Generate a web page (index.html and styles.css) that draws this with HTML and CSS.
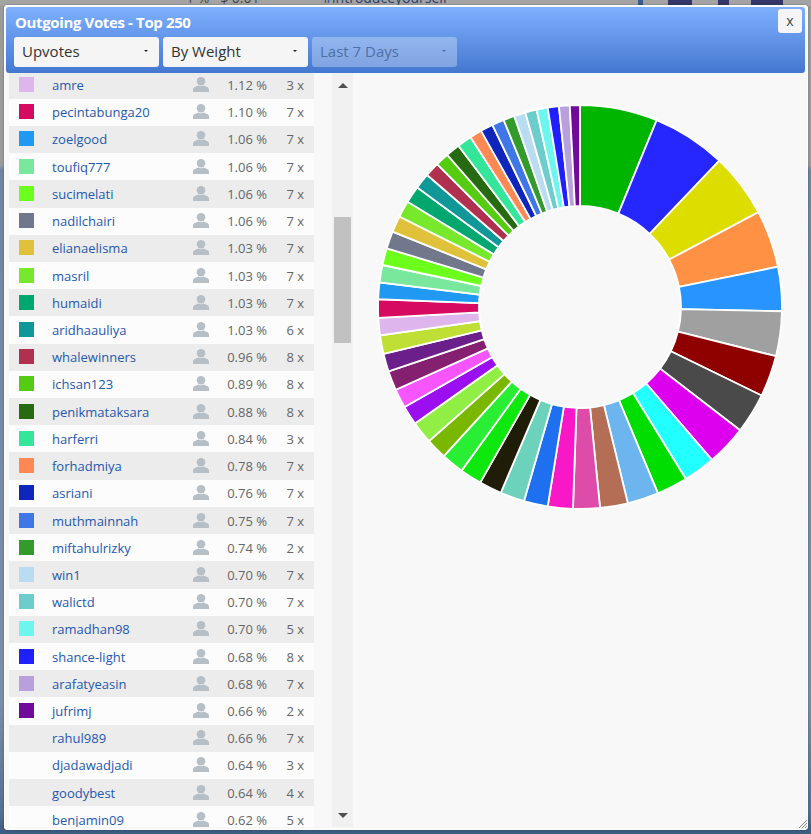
FILE: index.html
```html
<!DOCTYPE html>
<html lang="en">
<head>
<meta charset="utf-8">
<title>Outgoing Votes - Top 250</title>
<link rel="stylesheet" href="styles.css">
</head>
<body>
<div class="backdrop" aria-hidden="true">
  <span class="bd-text bd-a">1 % &nbsp; $ 0.01</span>
  <span class="bd-text bd-b">#introduceyourself</span>
  <i class="bd-block bd-1"></i><i class="bd-block bd-2"></i><i class="bd-block bd-3"></i><i class="bd-block bd-4"></i>
</div>
<div class="dialog">
  <header class="head">
    <h1 class="title">Outgoing Votes - Top 250</h1>
    <button class="close">x</button>
    <div class="selects">
      <div class="select"><span>Upvotes</span><i class="caret"></i></div>
      <div class="select"><span>By Weight</span><i class="caret"></i></div>
      <div class="select off"><span>Last 7 Days</span><i class="caret"></i></div>
    </div>
  </header>
  <div class="main">
    <div class="list">
      <div class="rows">
        <div class="row"><i class="sw c-amre"></i><a>amre</a><svg class="user"><use href="#u"/></svg><span class="pct">1.12 %</span><span class="cnt">3 x</span></div>
        <div class="row"><i class="sw c-pec"></i><a>pecintabunga20</a><svg class="user"><use href="#u"/></svg><span class="pct">1.10 %</span><span class="cnt">7 x</span></div>
        <div class="row"><i class="sw c-zoe"></i><a>zoelgood</a><svg class="user"><use href="#u"/></svg><span class="pct">1.06 %</span><span class="cnt">7 x</span></div>
        <div class="row"><i class="sw c-tou"></i><a>toufiq777</a><svg class="user"><use href="#u"/></svg><span class="pct">1.06 %</span><span class="cnt">7 x</span></div>
        <div class="row"><i class="sw c-suc"></i><a>sucimelati</a><svg class="user"><use href="#u"/></svg><span class="pct">1.06 %</span><span class="cnt">7 x</span></div>
        <div class="row"><i class="sw c-nad"></i><a>nadilchairi</a><svg class="user"><use href="#u"/></svg><span class="pct">1.06 %</span><span class="cnt">7 x</span></div>
        <div class="row"><i class="sw c-eli"></i><a>elianaelisma</a><svg class="user"><use href="#u"/></svg><span class="pct">1.03 %</span><span class="cnt">7 x</span></div>
        <div class="row"><i class="sw c-mas"></i><a>masril</a><svg class="user"><use href="#u"/></svg><span class="pct">1.03 %</span><span class="cnt">7 x</span></div>
        <div class="row"><i class="sw c-hum"></i><a>humaidi</a><svg class="user"><use href="#u"/></svg><span class="pct">1.03 %</span><span class="cnt">7 x</span></div>
        <div class="row"><i class="sw c-ari"></i><a>aridhaauliya</a><svg class="user"><use href="#u"/></svg><span class="pct">1.03 %</span><span class="cnt">6 x</span></div>
        <div class="row"><i class="sw c-wha"></i><a>whalewinners</a><svg class="user"><use href="#u"/></svg><span class="pct">0.96 %</span><span class="cnt">8 x</span></div>
        <div class="row"><i class="sw c-ich"></i><a>ichsan123</a><svg class="user"><use href="#u"/></svg><span class="pct">0.89 %</span><span class="cnt">8 x</span></div>
        <div class="row"><i class="sw c-pen"></i><a>penikmataksara</a><svg class="user"><use href="#u"/></svg><span class="pct">0.88 %</span><span class="cnt">8 x</span></div>
        <div class="row"><i class="sw c-har"></i><a>harferri</a><svg class="user"><use href="#u"/></svg><span class="pct">0.84 %</span><span class="cnt">3 x</span></div>
        <div class="row"><i class="sw c-for"></i><a>forhadmiya</a><svg class="user"><use href="#u"/></svg><span class="pct">0.78 %</span><span class="cnt">7 x</span></div>
        <div class="row"><i class="sw c-asr"></i><a>asriani</a><svg class="user"><use href="#u"/></svg><span class="pct">0.76 %</span><span class="cnt">7 x</span></div>
        <div class="row"><i class="sw c-mut"></i><a>muthmainnah</a><svg class="user"><use href="#u"/></svg><span class="pct">0.75 %</span><span class="cnt">7 x</span></div>
        <div class="row"><i class="sw c-mif"></i><a>miftahulrizky</a><svg class="user"><use href="#u"/></svg><span class="pct">0.74 %</span><span class="cnt">2 x</span></div>
        <div class="row"><i class="sw c-win"></i><a>win1</a><svg class="user"><use href="#u"/></svg><span class="pct">0.70 %</span><span class="cnt">7 x</span></div>
        <div class="row"><i class="sw c-wal"></i><a>walictd</a><svg class="user"><use href="#u"/></svg><span class="pct">0.70 %</span><span class="cnt">7 x</span></div>
        <div class="row"><i class="sw c-ram"></i><a>ramadhan98</a><svg class="user"><use href="#u"/></svg><span class="pct">0.70 %</span><span class="cnt">5 x</span></div>
        <div class="row"><i class="sw c-sha"></i><a>shance-light</a><svg class="user"><use href="#u"/></svg><span class="pct">0.68 %</span><span class="cnt">8 x</span></div>
        <div class="row"><i class="sw c-ara"></i><a>arafatyeasin</a><svg class="user"><use href="#u"/></svg><span class="pct">0.68 %</span><span class="cnt">7 x</span></div>
        <div class="row"><i class="sw c-juf"></i><a>jufrimj</a><svg class="user"><use href="#u"/></svg><span class="pct">0.66 %</span><span class="cnt">2 x</span></div>
        <div class="row"><i class="sw"></i><a>rahul989</a><svg class="user"><use href="#u"/></svg><span class="pct">0.66 %</span><span class="cnt">7 x</span></div>
        <div class="row"><i class="sw"></i><a>djadawadjadi</a><svg class="user"><use href="#u"/></svg><span class="pct">0.64 %</span><span class="cnt">3 x</span></div>
        <div class="row"><i class="sw"></i><a>goodybest</a><svg class="user"><use href="#u"/></svg><span class="pct">0.64 %</span><span class="cnt">4 x</span></div>
        <div class="row"><i class="sw"></i><a>benjamin09</a><svg class="user"><use href="#u"/></svg><span class="pct">0.62 %</span><span class="cnt">5 x</span></div>
      </div>
    </div>
    <div class="scrollbar">
      <div class="arrow"><i class="tri up"></i></div>
      <div class="thumb"></div>
      <div class="arrow end"><i class="tri down"></i></div>
    </div>
    <div class="pane">
      <svg class="pie" id="pie" viewBox="-203 -203 406 406" width="406" height="406"></svg>
    </div>
  </div>
  <svg class="grip" viewBox="0 0 8 8" width="8" height="8"><path d="M0 8 8 0M3 8l5-5M6 8l2-2"/></svg>
</div>
<svg class="defs" width="0" height="0">
  <symbol id="u" viewBox="0 0 16 15"><ellipse cx="8" cy="4.200" rx="4.300" ry="4.200"/><path d="M0 15v-2.500c0-1.900 1.400-2.600 3.200-3.100l2-.8c1.800 1 3.800 1 5.600 0l2 .8c1.800.5 3.200 1.200 3.200 3.100V15z"/></symbol>
</svg>
<script src="chart.js"></script>
</body>
</html>
```

FILE: styles.css
```css
* { box-sizing: border-box; }
html, body { margin: 0; height: 100%; overflow: hidden; }
body {
  font-family: "Open Sans", sans-serif;
  padding: 5px 3px 0 4px;
  background: linear-gradient(#9b9b9b 0, #9b9b9b 165px, #6f85a3 170px, #7a8ea8 700px, #556f92 815px, #3d5c82 831px);
}
.backdrop { position: absolute; left: 0; top: 0; width: 811px; height: 6px; overflow: hidden; background: #a3a3a3; }
.bd-text { position: absolute; top: -12px; font-size: 14px; color: #444; white-space: nowrap; }
.bd-a { left: 186px; }
.bd-b { left: 323px; color: #25406e; }
.bd-block { position: absolute; top: 0; height: 6px; background: #35356a; }
.bd-1 { left: 638px; width: 5px; background: #3a5f8f; }
.bd-2 { left: 668px; width: 24px; }
.bd-3 { left: 718px; width: 11px; }
.bd-4 { left: 751px; width: 32px; }

.dialog {
  position: relative;
  width: 804px;
  height: 825px;
  padding: 2px 3px 3px 2px;
  background: #f8f8f8;
  border-radius: 4px;
  box-shadow: inset 0 0 0 1px #fff, 0 0 2px rgba(0, 0, 0, .4);
}
.head {
  position: relative;
  height: 66px;
  padding: 6px 8px 0;
  background: linear-gradient(#7eb0ff, #4478d0);
  border-radius: 3px;
}
.title { margin: 0 0 6px 1px; font-size: 15px; line-height: 18px; font-weight: 700; color: #fff; letter-spacing: -.37px; }
.close {
  position: absolute; top: 2px; right: 3px;
  width: 24px; height: 24px; padding: 0;
  border: 0; border-radius: 3px;
  background: #f5f5f5; color: #444;
  font: 14px/22px "Open Sans", sans-serif;
}
.selects { display: flex; gap: 4px; }
.select {
  display: flex; align-items: center; justify-content: space-between;
  width: 145px; height: 30px; padding: 0 11px 2px 8px;
  background: #f5f5f5; color: #333; border-radius: 3px;
  font-size: 15px;
}
.select.off { background: rgba(255, 255, 255, .3); color: #4f6fa8; }
.caret { width: 0; height: 0; border: 2.500px solid transparent; border-top-color: #222; border-bottom: 0; }
.off .caret { border-top-color: #4f6fa8; }

.main { display: flex; height: 754px; }
.list { width: 305px; margin-left: 3px; overflow: hidden; flex: none; }
.rows { margin-top: -1.6px; }
.row {
  display: grid;
  grid-template-columns: 15px 159px 16px 58px 37px;
  align-items: center;
  height: 27.22px;
  padding-left: 10px;
  font-size: 13px;
  color: #666;
  background: #fcfcfc;
}
.row:nth-child(odd) { background: #ececec; }
.row a { color: #2458b0; padding-left: 18px; }
.sw { display: block; width: 15px; height: 15px; margin-top: -1px; }
.user { width: 16px; height: 15px; fill: #b7bfc6; margin-top: -1px; }
.pct, .cnt { text-align: right; }
.scrollbar { width: 21px; margin-left: 18px; flex: none; display: flex; flex-direction: column; background: #f1f1f1; }
.arrow { height: 24px; flex: none; display: flex; align-items: center; justify-content: center; }
.arrow.end { margin-top: auto; }
.thumb { height: 126px; margin: 120px 2px 0; background: #c1c1c1; }
.tri { width: 0; height: 0; border: 5px solid transparent; }
.tri.up { border-bottom-color: #505050; border-top: 0; }
.tri.down { border-top-color: #505050; border-bottom: 0; }
.pane { flex: 1; padding: 30.700px 0 0 24px; background: #f8f8f8; }
.pie { display: block; }
.pie path { stroke: #fff; stroke-width: 1.800; }
.grip { position: absolute; right: 1px; bottom: 2px; fill: none; stroke: #888; stroke-width: 1; }
.defs { position: absolute; }

.c-amre { background: #dfb5ee; }
.c-pec { background: #d60a60; }
.c-zoe { background: #1f99f2; }
.c-tou { background: #7ae89c; }
.c-suc { background: #6dff1c; }
.c-nad { background: #72788c; }
.c-eli { background: #dfc23a; }
.c-mas { background: #77e82c; }
.c-hum { background: #00a870; }
.c-ari { background: #109898; }
.c-wha { background: #b03050; }
.c-ich { background: #55cc11; }
.c-pen { background: #266b11; }
.c-har { background: #33e69a; }
.c-for { background: #ff8855; }
.c-asr { background: #0f25bb; }
.c-mut { background: #3f77e6; }
.c-mif { background: #339a2c; }
.c-win { background: #b9dcf3; }
.c-wal { background: #6dcdcd; }
.c-ram { background: #6df6ee; }
.c-sha { background: #2020ff; }
.c-ara { background: #b8a0dc; }
.c-juf { background: #6f0a99; }
```

FILE: chart.js
```js
// [end angle in degrees clockwise from 12 o'clock, colour]
var slices = [
  [22.3, "#00b500"], [43.6, "#2626ff"], [62, "#dddd00"], [78.5, "#ff9144"], [91.2, "#2794ff"],
  [104.1, "#a0a0a0"], [116, "#8f0000"], [127.6, "#4a4a4a"], [139.2, "#dd00ee"], [148.4, "#22ffff"],
  [157.3, "#00dd00"], [166.3, "#6db5ee"], [174.3, "#b36e55"], [182, "#dd4ca9"], [189.2, "#f918c8"],
  [196.1, "#1f70f0"], [203.1, "#6dd2bb"], [209.6, "#1f1c08"], [215.9, "#0fe80f"], [222.4, "#29ee33"],
  [228.4, "#7ab800"], [234.8, "#90ee44"], [240.3, "#9b0eef"], [245.8, "#f755ff"], [251.4, "#851f70"],
  [256.6, "#6b1f8a"], [261.9, "#bfdf37"], [266.9, "#dfb5ee"], [272.2, "#d60a60"], [277, "#1f99f2"],
  [282, "#7ae89c"], [286.9, "#6dff1c"], [291.9, "#72788c"], [296.6, "#dfc23a"], [301.4, "#77e82c"],
  [306.3, "#00a870"], [310.8, "#109898"], [315, "#b03050"], [318.9, "#55cc11"], [323, "#266b11"],
  [327.2, "#33e69a"], [330.7, "#ff8855"], [334.3, "#0f25bb"], [337.8, "#3f77e6"], [341, "#339a2c"],
  [344.3, "#b9dcf3"], [347.6, "#6dcdcd"], [350.8, "#6df6ee"], [354, "#2020ff"], [357.1, "#b8a0dc"],
  [360, "#6f0a99"]
];
var R = 202, r = 101;
function pt(rad, deg) {
  var a = deg * Math.PI / 180;
  return (rad * Math.sin(a)).toFixed(2) + " " + (-rad * Math.cos(a)).toFixed(2);
}
var svg = document.getElementById("pie"), start = 0;
slices.forEach(function (s) {
  var p = document.createElementNS("http://www.w3.org/2000/svg", "path");
  p.setAttribute("d", "M" + pt(R, start) + "A" + R + " " + R + " 0 0 1 " + pt(R, s[0]) +
    "L" + pt(r, s[0]) + "A" + r + " " + r + " 0 0 0 " + pt(r, start) + "Z");
  p.setAttribute("fill", s[1]);
  svg.appendChild(p);
  start = s[0];
});
```
